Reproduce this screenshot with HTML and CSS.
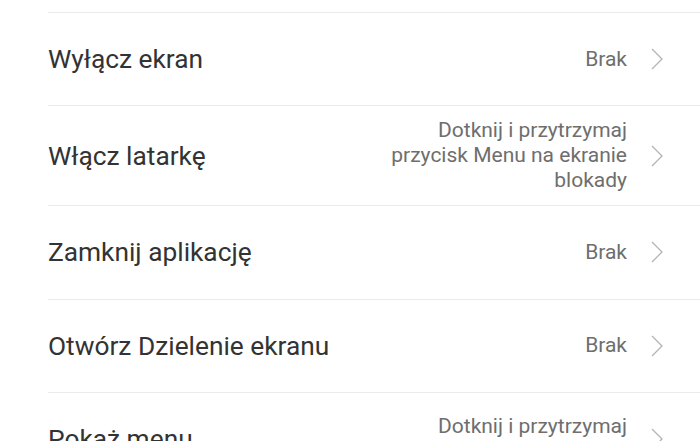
FILE: index.html
```html
<!DOCTYPE html>
<html lang="pl">
<head>
    <meta charset="UTF-8">
    <meta name="viewport" content="width=device-width, initial-scale=1.0">
    <title>Skróty gestów</title>
    <link rel="stylesheet" href="styles.css">
</head>
<body>
    <div class="list">
        <div class="row">
            <span class="title">Wyłącz ekran</span>
            <span class="value">Brak</span>
            <svg class="arrow" viewBox="0 0 12 22"><path d="M1 1 L11 11 L1 21"/></svg>
        </div>
        <div class="row">
            <span class="title">Włącz latarkę</span>
            <span class="value">Dotknij i przytrzymaj przycisk Menu na ekranie blokady</span>
            <svg class="arrow" viewBox="0 0 12 22"><path d="M1 1 L11 11 L1 21"/></svg>
        </div>
        <div class="row">
            <span class="title">Zamknij aplikację</span>
            <span class="value">Brak</span>
            <svg class="arrow" viewBox="0 0 12 22"><path d="M1 1 L11 11 L1 21"/></svg>
        </div>
        <div class="row">
            <span class="title">Otwórz Dzielenie ekranu</span>
            <span class="value">Brak</span>
            <svg class="arrow" viewBox="0 0 12 22"><path d="M1 1 L11 11 L1 21"/></svg>
        </div>
        <div class="row">
            <span class="title">Pokaż menu</span>
            <span class="value">Dotknij i przytrzymaj przycisk Menu</span>
            <svg class="arrow" viewBox="0 0 12 22"><path d="M1 1 L11 11 L1 21"/></svg>
        </div>
    </div>
</body>
</html>
```

FILE: styles.css
```css
body {
    margin: 0;
    background-color: #ffffff;
    font-family: Roboto, "Noto Sans", sans-serif;
}

.list {
    margin-top: 12px;
    padding-left: 48px;
}

.row {
    display: flex;
    align-items: center;
    box-sizing: border-box;
    min-height: 93.3px;
    padding: 12px 37px 12px 0;
    border-top: 1px solid #ebebeb;
}

.title {
    flex: 1;
    font-size: 26.3px;
    color: #333333;
}

.value {
    max-width: 240px;
    font-size: 21px;
    line-height: 25px;
    text-align: right;
    color: #6e6e6e;
}

.arrow {
    width: 12px;
    height: 22px;
    margin-left: 24px;
    flex-shrink: 0;
}

.arrow path {
    fill: none;
    stroke: #b4b4b4;
    stroke-width: 1.3;
}
```
